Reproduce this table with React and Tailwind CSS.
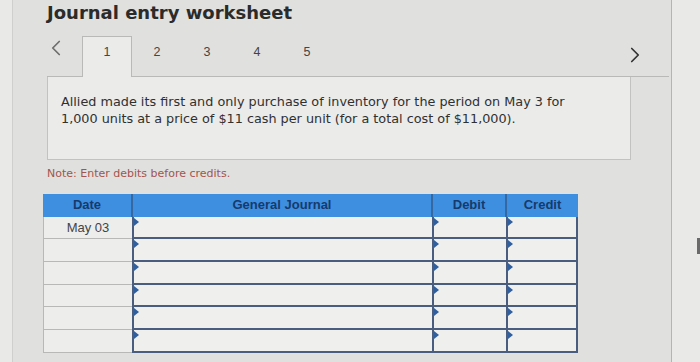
import { ChevronLeft, ChevronRight } from "lucide-react";

const rows = ["May 03", "", "", "", "", ""];

function Marker() {
  return (
    <span className="absolute left-0 top-[1px] w-0 h-0 border-t-[4px] border-b-[4px] border-l-[5px] border-t-transparent border-b-transparent border-l-[#2f5f9f]" />
  );
}

export default function App() {
  const tabs = [1, 2, 3, 4, 5];

  return (
    <div className="w-[700px] h-[362px] flex overflow-hidden bg-[#e6e6e4] font-['DejaVu_Sans',sans-serif]">
      {/* left strip */}
      <div className="w-[13px] bg-[#e9e9e7] border-r border-[#cfcfcd]" />

      {/* worksheet panel */}
      <div className="w-[659px] bg-[#e0e0de] border-r border-[#b4b4b2] pl-[34px] pr-[2px]">
        <h1 className="text-[18px] font-bold text-[#2b2b2b] leading-[24px] pt-[1px]">
          Journal entry worksheet
        </h1>

        {/* Tabs */}
        <div className="mt-[10px] h-[42px] flex items-end border-b border-[#b9b9b7]">
          <div className="w-[35px] h-full flex items-start justify-start text-[#6e6e6e]">
            <ChevronLeft size={26} strokeWidth={1.6} className="-ml-[4px]" />
          </div>
          {tabs.map((t) => (
            <div
              key={t}
              className={
                t === 1
                  ? "w-[50px] h-full -mb-px pb-[10px] flex items-center justify-center bg-[#ebebea] border border-b-0 border-[#b9b9b7] text-[12.5px] text-[#444] font-['Liberation_Sans',sans-serif]"
                  : "w-[50px] h-full pb-[7px] flex items-center justify-center text-[12.5px] text-[#444] font-['Liberation_Sans',sans-serif]"
              }
            >
              {t}
            </div>
          ))}
          <div className="flex-1" />
          <div className="w-[40px] h-full flex items-center justify-center pb-[2px] text-[#333] mr-[14px]">
            <ChevronRight size={26} strokeWidth={1.6} />
          </div>
        </div>

        {/* Question box */}
        <div className="w-[584px] h-[83px] bg-[#ebebea] border border-t-0 border-[#c2c2c0] px-[13px] pt-[16px] text-[12.8px] leading-[17px] text-[#303030]">
          <p>Allied made its first and only purchase of inventory for the period on May 3 for</p>
          <p>1,000 units at a price of $11 cash per unit (for a total cost of $11,000).</p>
        </div>

        <p className="mt-[6px] text-[11px] text-[#a3544d]">Note: Enter debits before credits.</p>

        {/* Journal table */}
        <div className="-ml-[4px] mt-[11px] w-[535px] font-['Liberation_Sans',sans-serif] text-[13px]">
          <div className="flex h-[23px] bg-[#3f8fe0] text-[#173a6c] font-bold">
            <div className="w-[88px] flex items-center justify-center">Date</div>
            <div className="w-[300px] flex items-center justify-center border-l-2 border-[#34689f]">
              General Journal
            </div>
            <div className="w-[74px] flex items-center justify-center border-l-2 border-[#34689f]">Debit</div>
            <div className="flex-1 flex items-center justify-center border-l-2 border-[#34689f]">Credit</div>
          </div>
          <div className="border-l border-[#b8b8b6]">
            {rows.map((d, i) => (
              <div key={i} className="flex h-[22.7px]">
                <div className="w-[88px] flex items-center justify-center bg-[#ededec] border-b border-[#b8b8b6] text-[#444]">
                  {d}
                </div>
                <div className="relative w-[300px] bg-[#efefee] border-l-2 border-b-2 border-[#4b5d7e]">
                  <Marker />
                </div>
                <div className="relative w-[74px] bg-[#efefee] border-l-2 border-b-2 border-[#4b5d7e]">
                  <Marker />
                </div>
                <div className="relative flex-1 bg-[#efefee] border-l-2 border-r-2 border-b-2 border-[#4b5d7e]">
                  <Marker />
                </div>
              </div>
            ))}
          </div>
        </div>
      </div>

      {/* right strip */}
      <div className="flex-1 bg-[#e9e9e7] relative">
        <span className="absolute right-0 top-[238px] w-[3px] h-[16px] bg-[#6a6a6a]" />
      </div>
    </div>
  );
}
